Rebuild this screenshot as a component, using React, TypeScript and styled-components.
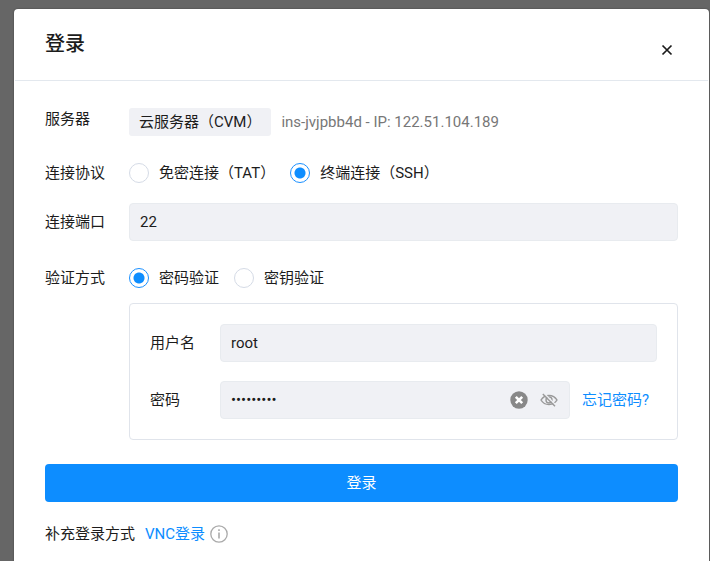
import React, { useState } from "react";
import styled, { createGlobalStyle } from "styled-components";

const GlobalStyle = createGlobalStyle`
  *, *::before, *::after { box-sizing: border-box; }
  body {
    margin: 0;
    background: #666;
    color: #1c1c1c;
    font: 15px/22px Roboto, "Noto Sans CJK SC", sans-serif;
  }
  button, input { font: inherit; color: inherit; }
`;

const Overlay = styled.div`
  min-height: 100vh;
  display: flex;
  padding: 9px 1px 0 14px;
  background: #666;
`;

const Dialog = styled.section`
  flex: 1;
  min-width: 0;
  background: #fff;
  border-radius: 4px 4px 0 0;
  box-shadow: 0 0 2px rgba(0, 0, 0, 0.4);
`;

const Header = styled.header`
  display: flex;
  justify-content: space-between;
  height: 72px;
  margin: 0 1px;
  padding: 0 30px;
  border-bottom: 1px solid #e3e8ee;
`;

const Title = styled.h1`
  margin: 22px 0 0;
  font-size: 20px;
  line-height: 26px;
  font-weight: 500;
`;

const IconButton = styled.button<{ $size: number }>`
  display: flex;
  align-items: center;
  justify-content: center;
  flex: none;
  width: ${(p) => p.$size}px;
  height: ${(p) => p.$size}px;
  padding: 0;
  border: 0;
  background: none;
  cursor: pointer;
`;

const CloseSlot = styled.div`
  padding-top: 30px;
`;

const Form = styled.form`
  padding: 27px 31px 16px;
`;

const Row = styled.div<{ $gap?: number; $align?: string }>`
  display: flex;
  align-items: ${(p) => p.$align ?? "center"};
  margin-top: ${(p) => p.$gap ?? 0}px;
`;

const RowLabel = styled.label<{ $width?: number }>`
  flex: none;
  width: ${(p) => p.$width ?? 84}px;
  white-space: nowrap;
`;

const ServerInfo = styled.div`
  display: flex;
  align-items: center;
  gap: 10px;
`;

const Chip = styled.span`
  padding: 3px 10px;
  border-radius: 3px;
  background: #f0f1f5;
  white-space: nowrap;
`;

const Muted = styled.span`
  color: #777;
`;

const RadioList = styled.div`
  display: flex;
  gap: 15px;
`;

const RadioLabel = styled.label`
  display: flex;
  align-items: center;
  gap: 10px;
  white-space: nowrap;
  cursor: pointer;
`;

const Radio = styled.input`
  appearance: none;
  width: 20px;
  height: 20px;
  margin: 0;
  border: 1px solid #d5dbe6;
  border-radius: 50%;
  background: #fff;

  &:checked {
    border-color: #1a90ff;
    background: radial-gradient(circle, #0d8dff 5px, #fff 6px);
  }
`;

const Field = styled.div`
  display: flex;
  align-items: center;
  flex: 1;
  min-width: 0;
  height: 38px;
  padding: 0 10px;
  gap: 10px;
  border: 1px solid #e8ebef;
  border-radius: 4px;
  background: #f0f1f5;
`;

const TextInput = styled.input`
  flex: 1;
  min-width: 0;
  height: 22px;
  padding: 0;
  border: 0;
  outline: 0;
  background: none;
`;

const Credentials = styled.div`
  margin: 14px 0 0 84px;
  padding: 20px;
  border: 1px solid #e0e4eb;
  border-radius: 4px;
`;

const Link = styled.a<{ $left: number }>`
  flex: none;
  margin-left: ${(p) => p.$left}px;
  color: #0d8dff;
  text-decoration: none;
`;

const LinkSlot = styled.div`
  flex: none;
  width: 87px;
`;

const Submit = styled.button`
  display: block;
  width: 100%;
  height: 38px;
  margin-top: 24px;
  padding: 0;
  border: 0;
  border-radius: 4px;
  background: #0d8dff;
  color: #fff;
  cursor: pointer;
`;

const Footer = styled.footer`
  display: flex;
  align-items: center;
  margin-top: 21px;
`;

const InfoSlot = styled.span`
  display: flex;
  margin-left: 5px;
`;

type Option = { value: string; text: string };

function RadioGroup(props: { name: string; label: string; options: Option[]; initial: string }) {
  const [value, setValue] = useState(props.initial);
  return (
    <RadioList role="radiogroup" aria-label={props.label}>
      {props.options.map((o) => (
        <RadioLabel key={o.value}>
          <Radio type="radio" name={props.name} checked={value === o.value} onChange={() => setValue(o.value)} />
          {o.text}
        </RadioLabel>
      ))}
    </RadioList>
  );
}

const CloseIcon = () => (
  <svg width="12" height="12" viewBox="0 0 12 12" fill="none" stroke="#1c1c1c" strokeWidth="1.7">
    <path d="M1.5 1.5 10.5 10.5M10.5 1.5 1.5 10.5" />
  </svg>
);

const ClearIcon = () => (
  <svg width="18" height="18" viewBox="0 0 18 18">
    <circle cx="9" cy="9" r="8.7" fill="#888" />
    <path d="M5.8 5.8 12.2 12.2M12.2 5.8 5.8 12.2" stroke="#fff" strokeWidth="2.6" />
  </svg>
);

const EyeOffIcon = () => (
  <svg width="18" height="18" viewBox="0 0 18 18" fill="none" stroke="#999" strokeWidth="1.4">
    <path d="M1 9C4.6 2.9 13.4 2.9 17 9C13.4 15.1 4.6 15.1 1 9Z" />
    <circle cx="9" cy="9" r="3" />
    <path d="M4 2.2 16 14.2" stroke="#f0f1f5" />
    <path d="M2.8 3 15 15.2" />
  </svg>
);

const InfoIcon = () => (
  <svg width="18" height="18" viewBox="0 0 18 18" fill="none" stroke="#aaa">
    <circle cx="9" cy="9" r="8.2" strokeWidth="1.3" />
    <path d="M9 7.5V13.5M9 4.2V6" strokeWidth="1.6" />
  </svg>
);

export default function App() {
  const [port, setPort] = useState("22");
  const [user, setUser] = useState("root");
  const [password, setPassword] = useState("password1");

  return (
    <Overlay>
      <GlobalStyle />
      <Dialog role="dialog" aria-labelledby="login-title">
        <Header>
          <Title id="login-title">登录</Title>
          <CloseSlot>
            <IconButton type="button" aria-label="关闭" $size={22}>
              <CloseIcon />
            </IconButton>
          </CloseSlot>
        </Header>
        <Form onSubmit={(e) => e.preventDefault()}>
          <Row $align="flex-start">
            <RowLabel as="span">服务器</RowLabel>
            <ServerInfo>
              <Chip>云服务器（CVM）</Chip>
              <Muted>ins-jvjpbb4d - IP: 122.51.104.189</Muted>
            </ServerInfo>
          </Row>
          <Row $gap={26}>
            <RowLabel as="span">连接协议</RowLabel>
            <RadioGroup
              name="protocol"
              label="连接协议"
              initial="ssh"
              options={[
                { value: "tat", text: "免密连接（TAT）" },
                { value: "ssh", text: "终端连接（SSH）" },
              ]}
            />
          </Row>
          <Row $gap={19}>
            <RowLabel htmlFor="port">连接端口</RowLabel>
            <Field>
              <TextInput id="port" value={port} onChange={(e) => setPort(e.target.value)} />
            </Field>
          </Row>
          <Row $gap={26}>
            <RowLabel as="span">验证方式</RowLabel>
            <RadioGroup
              name="auth"
              label="验证方式"
              initial="password"
              options={[
                { value: "password", text: "密码验证" },
                { value: "key", text: "密钥验证" },
              ]}
            />
          </Row>
          <Credentials>
            <Row>
              <RowLabel htmlFor="user" $width={70}>用户名</RowLabel>
              <Field>
                <TextInput id="user" value={user} onChange={(e) => setUser(e.target.value)} />
              </Field>
            </Row>
            <Row $gap={19}>
              <RowLabel htmlFor="password" $width={70}>密码</RowLabel>
              <Field>
                <TextInput
                  id="password"
                  type="password"
                  value={password}
                  onChange={(e) => setPassword(e.target.value)}
                />
                <IconButton type="button" aria-label="清除" $size={20} onClick={() => setPassword("")}>
                  <ClearIcon />
                </IconButton>
                <IconButton type="button" aria-label="显示密码" $size={20}>
                  <EyeOffIcon />
                </IconButton>
              </Field>
              <LinkSlot>
                <Link href="#forgot" $left={12}>忘记密码?</Link>
              </LinkSlot>
            </Row>
          </Credentials>
          <Submit type="submit">登录</Submit>
          <Footer>
            <span>补充登录方式</span>
            <Link href="#vnc" $left={10}>VNC登录</Link>
            <InfoSlot>
              <InfoIcon />
            </InfoSlot>
          </Footer>
        </Form>
      </Dialog>
    </Overlay>
  );
}
